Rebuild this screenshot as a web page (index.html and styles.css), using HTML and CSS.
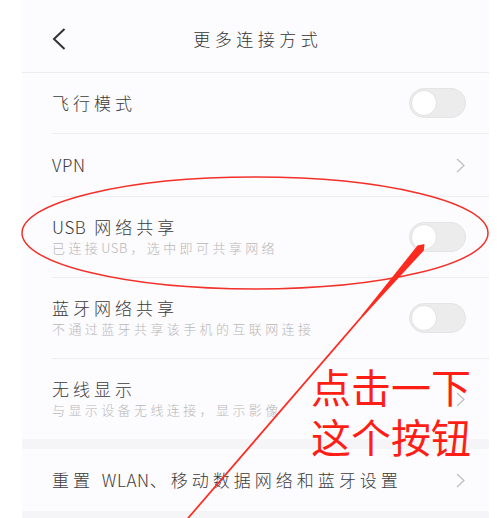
FILE: index.html
```html
<!DOCTYPE html>
<html lang="zh-CN">
<head>
<meta charset="utf-8">
<title>更多连接方式</title>
<link rel="stylesheet" href="styles.css">
</head>
<body>
<div class="panel">
  <header class="header">
    <span class="back">
      <svg width="14" height="22" viewBox="0 0 14 22"><polyline points="12.5,1 2,11 12.5,21" fill="none" stroke="#333" stroke-width="2"/></svg>
    </span>
    <h1 class="title">更多连接方式</h1>
    <span></span>
  </header>
  <div class="list">
    <div class="row r1">
      <div class="texts"><div class="label">飞行模式</div></div>
      <span class="toggle"><span class="knob"></span></span>
    </div>
    <div class="row r2">
      <div class="texts"><div class="label"><span class="lat">VPN</span></div></div>
      <svg class="chev" width="9" height="15" viewBox="0 0 9 15"><polyline points="1,1 8,7.5 1,14" fill="none" stroke="#bdbdbd" stroke-width="1.2"/></svg>
    </div>
    <div class="row tall">
      <div class="texts"><div class="label"><span class="lat">USB</span> 网络共享</div><div class="sub">已连接<span class="lat">USB</span>，选中即可共享网络</div></div>
      <span class="toggle"><span class="knob"></span></span>
    </div>
    <div class="row tall">
      <div class="texts"><div class="label">蓝牙网络共享</div><div class="sub">不通过蓝牙共享该手机的互联网连接</div></div>
      <span class="toggle"><span class="knob"></span></span>
    </div>
    <div class="row tall last">
      <div class="texts"><div class="label">无线显示</div><div class="sub">与显示设备无线连接，显示影像</div></div>
      <svg class="chev" width="9" height="15" viewBox="0 0 9 15"><polyline points="1,1 8,7.5 1,14" fill="none" stroke="#bdbdbd" stroke-width="1.2"/></svg>
    </div>
  </div>
  <div class="gap"></div>
  <div class="list">
    <div class="row r2 last">
      <div class="texts"><div class="label">重置 <span class="lat">WLAN</span>、移动数据网络和蓝牙设置</div></div>
      <svg class="chev" width="9" height="15" viewBox="0 0 9 15"><polyline points="1,1 8,7.5 1,14" fill="none" stroke="#bdbdbd" stroke-width="1.2"/></svg>
    </div>
  </div>
  <div class="gap"></div>
</div>

<svg class="marks" width="497" height="518" viewBox="0 0 497 518">
  <ellipse cx="255" cy="233" rx="233" ry="56" fill="none" stroke="#f2312a" stroke-width="1.5"/>
  <line x1="421" y1="248" x2="183" y2="524" stroke="#ff2a1f" stroke-width="1.7"/>
  <polygon points="424.5,244 423.8,250.5 362.8,316.7 361.6,315.5 417.5,245.5" fill="#ff2a1f"/>
</svg>
<div class="note">点击一下<br>这个按钮</div>
</body>
</html>
```

FILE: styles.css
```css
html, body {
  margin: 0;
  padding: 0;
}
body {
  position: relative;
  width: 497px;
  height: 518px;
  overflow: hidden;
  background: #ffffff;
  font-family: "Noto Sans CJK SC", "Noto Sans", sans-serif;
  color: #333;
}
.panel {
  margin-left: 22px;
  width: 467px;
  background: #fcfbfd;
}
.header {
  height: 72px;
  border-bottom: 1px solid #ebebed;
  display: grid;
  grid-template-columns: 1fr auto 1fr;
  align-items: center;
}
.back {
  display: flex;
  margin-left: 30px;
  margin-top: 6px;
}
.title {
  margin: 0;
  font-size: 17px;
  font-weight: 300;
  letter-spacing: 4.5px;
  margin-right: -4.5px;
  color: #333;
  line-height: 24px;
  margin-top: 6px;
}
.list {
  padding-left: 30px;
}
.row {
  display: flex;
  align-items: center;
  justify-content: space-between;
  border-bottom: 1px solid #eeedf0;
  padding-right: 22px;
}
.row.last {
  border-bottom: none;
}
.r1 { height: 60px; }
.r2 { height: 62px; }
.tall { height: 80px; }
.label {
  font-size: 17px;
  font-weight: 300;
  letter-spacing: 4px;
  line-height: 22px;
  color: #3a3a3a;
}
.lat {
  letter-spacing: 0.6px;
}
.sub .lat {
  letter-spacing: 0.6px;
  margin-right: 2.5px;
}
.sub {
  font-size: 13px;
  font-weight: 300;
  letter-spacing: 3.4px;
  line-height: 20px;
  color: #b8b8b8;
}
.toggle {
  position: relative;
  width: 55px;
  height: 28px;
  border-radius: 15px;
  background: #ececec;
  border: 1px solid #e4e4e4;
  margin-right: 1px;
}
.knob {
  position: absolute;
  left: 1px;
  top: 1px;
  width: 24px;
  height: 24px;
  border-radius: 50%;
  background: #fff;
  border: 1px solid #e2e2e2;
}
.chev {
  margin-right: 2px;
}
.gap {
  height: 10px;
  background: #f5f4f7;
}
.marks {
  position: absolute;
  left: 0;
  top: 0;
  pointer-events: none;
}
.note {
  position: absolute;
  left: 311px;
  top: 361px;
  font-size: 40px;
  line-height: 50px;
  font-weight: 400;
  color: #ff1e16;
  white-space: nowrap;
}
```
